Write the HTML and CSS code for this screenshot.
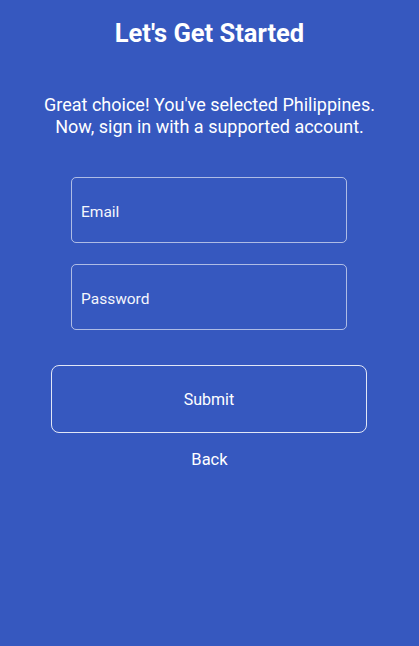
FILE: index.html
```
<!DOCTYPE html>
<html>
<head>
<meta charset="utf-8">
<link rel="stylesheet" href="styles.css">
</head>
<body>
<div class="screen">
  <h1 class="title">Let's Get Started</h1>
  <p class="subtitle">Great choice! You've selected Philippines.<br>Now, sign in with a supported account.</p>
  <div class="fields">
    <div class="field"><span class="label">Email</span></div>
    <div class="field"><span class="label">Password</span></div>
  </div>
  <div class="submit">Submit</div>
  <div class="back">Back</div>
</div>
</body>
</html>
```
FILE: styles.css
```
html, body {
  margin: 0;
  padding: 0;
  background: #3658bf;
}
.screen {
  width: 419px;
  height: 646px;
  background: #3658bf;
  color: #fff;
  font-family: Roboto, "Noto Sans", sans-serif;
  display: flex;
  flex-direction: column;
  align-items: center;
}
.title {
  margin: 17px 0 0;
  font-size: 25.5px;
  font-weight: 700;
  line-height: 32px;
}
.subtitle {
  margin: 45px 0 0;
  font-size: 18px;
  line-height: 22px;
  text-align: center;
}
.fields {
  margin-top: 39px;
  margin-right: 1px;
  display: flex;
  flex-direction: column;
  gap: 21px;
}
.field {
  width: 265px;
  height: 64px;
  border: 1px solid rgba(255,255,255,0.6);
  border-radius: 5px;
  display: flex;
  align-items: center;
  padding-left: 9px;
  box-sizing: content-box;
}
.label {
  font-size: 15.5px;
  color: #f4f6fc;
  padding-top: 3px;
}
.submit {
  margin-top: 35px;
  margin-right: 1px;
  width: 314px;
  height: 65px;
  border: 1px solid rgba(255,255,255,0.85);
  border-radius: 8px;
  display: flex;
  align-items: center;
  justify-content: center;
  font-size: 16px;
  padding-top: 1px;
  box-sizing: content-box;
}
.back {
  margin-top: 17px;
  font-size: 16.5px;
  line-height: 20px;
}
```
